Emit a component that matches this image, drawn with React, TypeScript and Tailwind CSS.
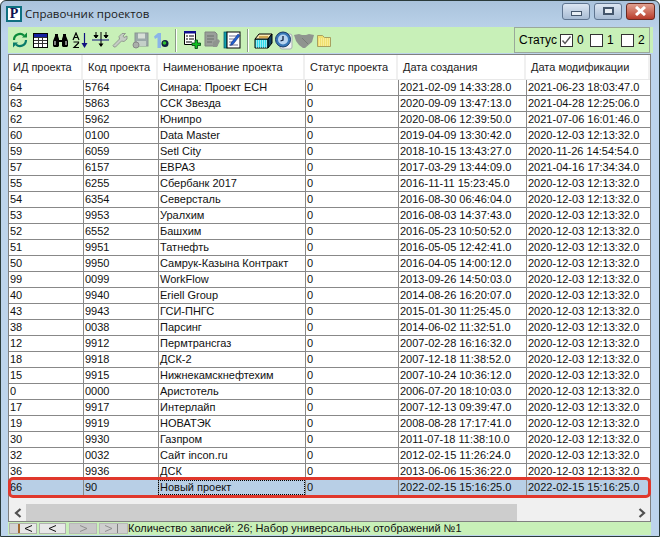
import React from "react";

const rows: [string, string, string, string, string][] = [
  ["64","5764","Синара: Проект ЕСН","2021-02-09 14:33:28.0","2021-06-23 18:03:47.0"],
  ["63","5863","ССК Звезда","2020-09-09 13:47:13.0","2021-04-28 12:25:06.0"],
  ["62","5962","Юнипро","2020-08-06 12:39:50.0","2021-07-06 16:01:46.0"],
  ["60","0100","Data Master","2019-04-09 13:30:42.0","2020-12-03 12:13:32.0"],
  ["59","6059","Setl City","2018-10-15 13:43:27.0","2020-11-26 14:54:54.0"],
  ["57","6157","ЕВРАЗ","2017-03-29 13:44:09.0","2021-04-16 17:34:34.0"],
  ["55","6255","Сбербанк 2017","2016-11-11 15:23:45.0","2020-12-03 12:13:32.0"],
  ["54","6354","Северсталь","2016-08-30 06:46:04.0","2020-12-03 12:13:32.0"],
  ["53","9953","Уралхим","2016-08-03 14:37:43.0","2020-12-03 12:13:32.0"],
  ["52","6552","Башхим","2016-05-23 10:50:52.0","2020-12-03 12:13:32.0"],
  ["51","9951","Татнефть","2016-05-05 12:42:41.0","2020-12-03 12:13:32.0"],
  ["50","9950","Самрук-Казына Контракт","2016-04-05 14:00:12.0","2020-12-03 12:13:32.0"],
  ["99","0099","WorkFlow","2013-09-26 14:50:03.0","2020-12-03 12:13:32.0"],
  ["40","9940","Eriell Group","2014-08-26 16:20:07.0","2020-12-03 12:13:32.0"],
  ["43","9943","ГСИ-ПНГС","2015-01-30 11:25:45.0","2020-12-03 12:13:32.0"],
  ["38","0038","Парсинг","2014-06-02 11:32:51.0","2020-12-03 12:13:32.0"],
  ["12","9912","Пермтрансгаз","2007-02-28 16:16:32.0","2020-12-03 12:13:32.0"],
  ["18","9918","ДСК-2","2007-12-18 11:38:52.0","2020-12-03 12:13:32.0"],
  ["15","9915","Нижнекамскнефтехим","2007-10-24 10:36:12.0","2020-12-03 12:13:32.0"],
  ["0","0000","Аристотель","2006-07-20 18:10:03.0","2020-12-03 12:13:32.0"],
  ["17","9917","Интерлайп","2007-12-13 09:39:47.0","2020-12-03 12:13:32.0"],
  ["19","9919","НОВАТЭК","2008-08-28 17:17:41.0","2020-12-03 12:13:32.0"],
  ["30","9930","Газпром","2011-07-18 11:38:10.0","2020-12-03 12:13:32.0"],
  ["32","0032","Сайт incon.ru","2012-02-15 11:26:24.0","2020-12-03 12:13:32.0"],
  ["36","9936","ДСК","2013-06-06 15:36:22.0","2020-12-03 12:13:32.0"],
];
const last: [string, string, string, string, string] = ["66","90","Новый проект","2022-02-15 15:16:25.0","2022-02-15 15:16:25.0"];

const Slot = ({ children }: { children: React.ReactNode }) => (
  <div className="w-[20px] h-[20px] flex items-center justify-center shrink-0">{children}</div>
);
const Sep = () => <div className="w-[2px] h-[23px] mx-[5px] bg-[#8a9a88] border-r border-white shrink-0" />;

const Icons = {
  refresh: (
    <svg width="18" height="18" viewBox="0 0 18 18" fill="none">
      <path d="M3 9a6 6 0 0 1 10-4.500" stroke="#0a8a3a" strokeWidth="2.200" />
      <path d="M15 9a6 6 0 0 1-10 4.500" stroke="#0a7a6a" strokeWidth="2.200" />
      <path d="M11 6.500h5v-5z" fill="#0a8a3a" />
      <path d="M7 11.500H2v5z" fill="#0a7a6a" />
    </svg>
  ),
  table: (
    <svg width="15" height="15" viewBox="0 0 15 15">
      <rect x=".5" y=".5" width="14" height="14" fill="#fff" stroke="#000" />
      <rect x="1" y="1" width="13" height="3" fill="#1420a0" />
      <path d="M1 4.500h13M1 7.500h13M1 10.500h13M5.500 4v10M9.500 4v10" stroke="#333" />
    </svg>
  ),
  binoculars: (
    <svg width="17" height="15" viewBox="0 0 17 15">
      <path d="M1 13V8l2-5V1h3v2l1 3v1h3V6l1-3V1h3v2l2 5v5l-1 1h-4l-1-1V9H7v4l-1 1H2z" fill="#000" />
      <path d="M3 8v4M14 8v4" stroke="#fff" />
    </svg>
  ),
  sort: (
    <svg width="17" height="17" viewBox="0 0 17 17">
      <path d="M1 8l3-7 3 7M2.300 5.500h3.400" fill="none" stroke="#000" strokeWidth="1.200" />
      <path d="M1.500 10h5v1l-4.500 4.500h5" fill="none" stroke="#000" strokeWidth="1.200" />
      <path d="M12.500 1v11" stroke="#101080" strokeWidth="1.200" />
      <path d="M9.500 11h6l-3 5z" fill="#101080" />
    </svg>
  ),
  filter: (
    <svg width="17" height="16" viewBox="0 0 17 16" fill="none">
      <path d="M4 0v6M9 0v14M14 0v6" stroke="#000" />
      <path d="M2 3.500l2 2.500 2-2.500zM12 3.500l2 2.500 2-2.500z" fill="#000" stroke="#000" />
      <path d="M6.500 11.500L9 15l2.500-3.500z" fill="#000" />
      <path d="M0 8h17" stroke="#101080" />
    </svg>
  ),
  wrench: (
    <svg width="16" height="16" viewBox="0 0 16 16">
      <path d="M1 13.500L7.500 7 7 4.500 10 1.500h3.500L11 4l1 1.500L15 4v3l-3 2.500-2.500-.5L3.500 15H2z" fill="#c4ccc4" stroke="#858a85" strokeWidth=".8" />
    </svg>
  ),
  floppy: (
    <svg width="17" height="17" viewBox="0 0 17 17">
      <rect x="3" y="1" width="13" height="13" fill="#9aa8a8" stroke="#8a9494" />
      <rect x="6" y="1.500" width="7" height="5" fill="#d8e0d8" />
      <rect x="5" y="9" width="9" height="5" fill="#c4d0c8" />
      <circle cx="4" cy="13" r="3" fill="#aab0aa" stroke="#888" />
    </svg>
  ),
  one: (
    <svg width="17" height="17" viewBox="0 0 17 17">
      <path d="M2 4.500L6 1h3v15H5.500V5.500L3 7z" fill="#8ab4e8" />
      <circle cx="13" cy="11.500" r="3.500" fill="#102040" />
      <circle cx="12.500" cy="11" r="1.800" fill="#30c030" />
    </svg>
  ),
  docPlus: (
    <svg width="18" height="18" viewBox="0 0 18 18">
      <path d="M1.500.5h11v13h-11z" fill="#fff" stroke="#000" />
      <rect x="1" y="0" width="12" height="2.500" fill="#101090" />
      <path d="M3 5h2M6 5h5M3 8h2M6 8h5M3 11h6" stroke="#000" />
      <path d="M12 9h2.500v3h3v2.500h-3v3H12v-3H9V12h3z" fill="#10c020" stroke="#004010" strokeWidth=".8" />
    </svg>
  ),
  docGrey: (
    <svg width="18" height="18" viewBox="0 0 18 18">
      <path d="M2 1h10l2 2v12H2z" fill="#9a9f9a" stroke="#808580" />
      <path d="M4 5h7M4 8h7M4 11h5" stroke="#6d716d" />
      <path d="M10 11l5-3 2 2-3 6h-4z" fill="#8f948f" />
    </svg>
  ),
  notebook: (
    <svg width="18" height="18" viewBox="0 0 18 18">
      <rect x="1" y="1" width="3" height="16" fill="#10a0b0" stroke="#005060" strokeWidth=".7" />
      <rect x="4" y="1" width="13" height="16" fill="#fff" stroke="#000" />
      <path d="M6 5h8M6 8h5M6 11h4M6 14h9" stroke="#707090" />
      <path d="M8 12L15 3l2 1.500-7 9-2.500 1z" fill="#2060d0" stroke="#102060" strokeWidth=".5" />
    </svg>
  ),
  box: (
    <svg width="20" height="17" viewBox="0 0 20 17">
      <path d="M1 7h13v9H1z" fill="#30d8e8" stroke="#000" />
      <path d="M1 7l4-5h13l-4 5z" fill="#f8e8b0" stroke="#000" />
      <path d="M14 7l4-5v9l-4 5z" fill="#104060" stroke="#000" />
      <path d="M5 5h9" stroke="#c09030" strokeWidth="1.500" />
      <path d="M2 9h11M2 11h11M2 13h11M2 15h11" stroke="#fff" strokeDasharray="1 1" />
    </svg>
  ),
  clock: (
    <svg width="18" height="19" viewBox="0 0 18 19">
      <rect x="5" y="3" width="12" height="15" rx="2" fill="#f0f2f2" stroke="#a8b0b0" />
      <circle cx="8" cy="8.500" r="7.500" fill="#3878b8" stroke="#183868" />
      <circle cx="8" cy="8.500" r="5" fill="#b8d4f0" />
      <path d="M8 5v4l-2.500 1" fill="none" stroke="#102040" strokeWidth="1.300" />
    </svg>
  ),
  shake: (
    <svg width="20" height="15" viewBox="0 0 20 15">
      <path d="M0 2l5-1 3 1h4l3-1 5 1-2 7-7 6h-2L5 12 2 8z" fill="#8f948f" />
      <path d="M8 5l3 3 3 3" stroke="#777c77" fill="none" />
    </svg>
  ),
  folder: (
    <svg width="14" height="13" viewBox="0 0 14 13">
      <path d="M.5 1.500h5l2 2h6v9H.5z" fill="#f0e070" stroke="#a8a060" />
      <path d="M2 5h11M2 7h11M2 9h11M2 11h11" stroke="#fff8c0" strokeDasharray="1 1" />
    </svg>
  ),
};

const Check = ({ on }: { on?: boolean }) => (
  <div className="w-[13px] h-[13px] border border-[#333] bg-white flex items-center justify-center shrink-0">
    {on && (
      <svg width="11" height="11" viewBox="0 0 11 11" fill="none">
        <path d="M1.500 5.500L4 8.500 9.500 1.500" stroke="#555" strokeWidth="1.400" />
      </svg>
    )}
  </div>
);

const Cell = ({ w, children, cls = "" }: { w: string; children?: React.ReactNode; cls?: string }) => (
  <div className={`${w} h-full shrink-0 pl-[1px] border-l border-[#888] overflow-hidden whitespace-nowrap leading-[15px] ${cls}`}>{children}</div>
);

const Row = ({ r, sel }: { r: [string, string, string, string, string]; sel?: boolean }) => (
  <div className={`flex h-[16px] border-b border-[#888] ${sel ? "bg-[#b8cfe6]" : "bg-white"}`}>
    <div className="w-[74px] shrink-0 pl-[1px] overflow-hidden leading-[15px]">{r[0]}</div>
    <Cell w="w-[75px]">{r[1]}</Cell>
    <Cell w="w-[147px]" cls={sel ? "outline-1 outline-dotted -outline-offset-1 outline-black" : ""}>{r[2]}</Cell>
    <Cell w="w-[93px]">0</Cell>
    <Cell w="w-[128px]">{r[3]}</Cell>
    <Cell w="w-[124px]">{r[4]}</Cell>
  </div>
);

const Head = ({ w, children, cls = "pl-[5px]" }: { w: string; children: React.ReactNode; cls?: string }) => (
  <div className={`${w} shrink-0 ${cls} flex items-center border-r-2 border-[#f0f0f0] whitespace-nowrap overflow-hidden`}>{children}</div>
);

const Cap = ({ w, cls, children }: { w: string; cls: string; children: React.ReactNode }) => (
  <div className={`${w} h-[17px] rounded-[3px] border border-[#5f7590] flex items-center justify-center ${cls}`}>{children}</div>
);

const Chev = ({ dir, color }: { dir: "l" | "r"; color: string }) => (
  <svg width="9" height="7" viewBox="0 0 9 7" fill="none">
    <path d={dir === "l" ? "M8 .5L1 3.500 8 6.500" : "M1 .5L8 3.500 1 6.500"} stroke={color} strokeWidth="1" />
  </svg>
);

export default function App() {
  return (
    <div className="w-[660px] h-[538px] overflow-hidden bg-white text-[11px] text-[#111]" style={{ fontFamily: '"Liberation Sans", Arial, sans-serif' }}>
      <div className="w-[660px] h-[537px] border-[1px] border-[#2a3a3a] rounded-t-[6px] bg-gradient-to-b from-[#aac3dc] from-0% to-[#bdd4ec] to-[6%] flex flex-col">
        {/* Title */}
        <div className="h-[26px] flex items-center shrink-0 pl-[5px] pr-[4px]">
          <div className="w-[16px] h-[16px] bg-white border-2 border-[#0e7080] flex items-center justify-center text-[#101050] font-bold text-[14px] leading-none" style={{ fontFamily: '"Liberation Serif", serif' }}>P</div>
          <div className="ml-[3px] text-[11.500px] text-[#1a1a1a]" style={{ fontFamily: '"Open Sans", sans-serif' }}>Справочник проектов</div>
          <div className="ml-auto flex gap-[4px] -mt-[6px]">
            <Cap w="w-[28px]" cls="bg-gradient-to-b from-[#dce6f2] to-[#a8bcd4]"><div className="w-[11px] h-[5px] mt-[5px] bg-[#e8eef4] border border-[#44566c]" /></Cap>
            <Cap w="w-[28px]" cls="bg-gradient-to-b from-[#dce6f2] to-[#a8bcd4]"><div className="w-[11px] h-[8px] border-2 border-[#44566c] bg-[#e8eef4]" /></Cap>
            <Cap w="w-[29px]" cls="bg-gradient-to-b from-[#e0a090] to-[#b83a2a] border-[#6a2a20]">
              <svg width="13" height="10" viewBox="0 0 13 10"><path d="M2 1l9 8M11 1l-9 8" stroke="#fff" strokeWidth="3" /></svg>
            </Cap>
          </div>
        </div>
        {/* Toolbar */}
        <div className="ml-[7px] mr-[6px] h-[26px] bg-[#c8f0b8] flex items-center shrink-0">
          <div className="flex items-center pl-[2px] flex-1">
            <Slot>{Icons.refresh}</Slot>
            <Slot>{Icons.table}</Slot>
            <Slot>{Icons.binoculars}</Slot>
            <Slot>{Icons.sort}</Slot>
            <Slot>{Icons.filter}</Slot>
            <Slot>{Icons.wrench}</Slot>
            <Slot>{Icons.floppy}</Slot>
            <Slot>{Icons.one}</Slot>
            <Sep />
            <Slot>{Icons.docPlus}</Slot>
            <Slot>{Icons.docGrey}</Slot>
            <Slot>{Icons.notebook}</Slot>
            <Sep />
            <Slot>{Icons.box}</Slot>
            <Slot>{Icons.clock}</Slot>
            <Slot>{Icons.shake}</Slot>
            <Slot>{Icons.folder}</Slot>
          </div>
          <div className="w-[136px] h-[26px] mr-[3px] border border-[#9aa89a] flex items-center pl-[4px] text-[12px] text-black">
            <span className="mr-[3px]">Статус</span>
            <Check on /><span className="ml-[4px] w-[13px]">0</span>
            <Check /><span className="ml-[4px] w-[14px]">1</span>
            <Check /><span className="ml-[4px]">2</span>
          </div>
        </div>
        {/* Table */}
        <div className="ml-[7px] mr-[8px] mt-[1px] flex-1 border border-b-0 border-[#808080] bg-[#f0f0f0] flex flex-col min-h-0 relative">
          <div className="h-[25px] bg-white flex shrink-0 border-b border-[#e8e8e8] text-[#222] text-[11px]">
            <Head w="w-[74px]" cls="pl-[4px]">ИД проекта</Head>
            <Head w="w-[75px]">Код проекта</Head>
            <Head w="w-[147px]">Наименование проекта</Head>
            <Head w="w-[93px]">Статус проекта</Head>
            <Head w="w-[128px]">Дата создания</Head>
            <Head w="w-[124px]">Дата модификации</Head>
          </div>
          <div className="shrink-0">
            {rows.map((r) => <Row key={r[0] + r[1]} r={r} />)}
            <div className="relative">
              <Row r={last} sel />
              <div className="absolute -left-[1px] -right-[1px] -top-[3px] -bottom-[2px] border-[3px] border-[#e0382c] rounded-[5px]" />
            </div>
          </div>
          <div className="mt-auto h-[18px] flex items-center bg-[#f0f0f0] shrink-0 border-b border-[#808080]">
            <div className="w-[17px] flex justify-center">
              <svg width="8" height="10" viewBox="0 0 8 10" fill="none"><path d="M6.500 1L2 5l4.500 4" stroke="#505050" strokeWidth="2.200" /></svg>
            </div>
            <div className="h-full bg-[#cdcdcd] w-[491px]" />
            <div className="flex-1" />
            <div className="w-[17px] flex justify-center">
              <svg width="8" height="10" viewBox="0 0 8 10" fill="none"><path d="M1.500 1L6 5 1.500 9" stroke="#505050" strokeWidth="2.200" /></svg>
            </div>
          </div>
        </div>
        {/* Status */}
        <div className="ml-[7px] mr-[8px] h-[13px] mb-[1px] bg-[#c8f0b8] flex items-center shrink-0">
          <div className="ml-[1px] w-[28px] h-[11px] bg-[#d4d4d4] border border-[#b0b0b0] flex items-center shrink-0">
            <div className="w-[8px] shrink-0" />
            <div className="w-[2px] h-full bg-[#a06a30] shrink-0" />
            <div className="flex-1 bg-[#e8e8e8] h-full flex items-center justify-center"><Chev dir="l" color="#111" /></div>
          </div>
          <div className="ml-[2px] w-[27px] h-[11px] bg-[#e8e8e8] border border-[#b0b0b0] flex items-center justify-center shrink-0"><Chev dir="l" color="#111" /></div>
          <div className="ml-[3px] w-[28px] h-[11px] bg-[#c8c8c8] border border-[#b8b8b8] flex items-center justify-center shrink-0"><Chev dir="r" color="#909090" /></div>
          <div className="ml-[2px] w-[29px] h-[11px] bg-[#cfcfcf] border border-[#b8b8b8] flex items-center shrink-0">
            <div className="flex-1 h-full flex items-center justify-center"><Chev dir="r" color="#909090" /></div>
            <div className="w-[1px] h-full bg-[#808080] shrink-0" />
            <div className="w-[9px] shrink-0" />
          </div>
          <span className="text-[#111] leading-none whitespace-nowrap">Количество записей: 26; Набор универсальных отображений №1</span>
        </div>
      </div>
    </div>
  );
}
